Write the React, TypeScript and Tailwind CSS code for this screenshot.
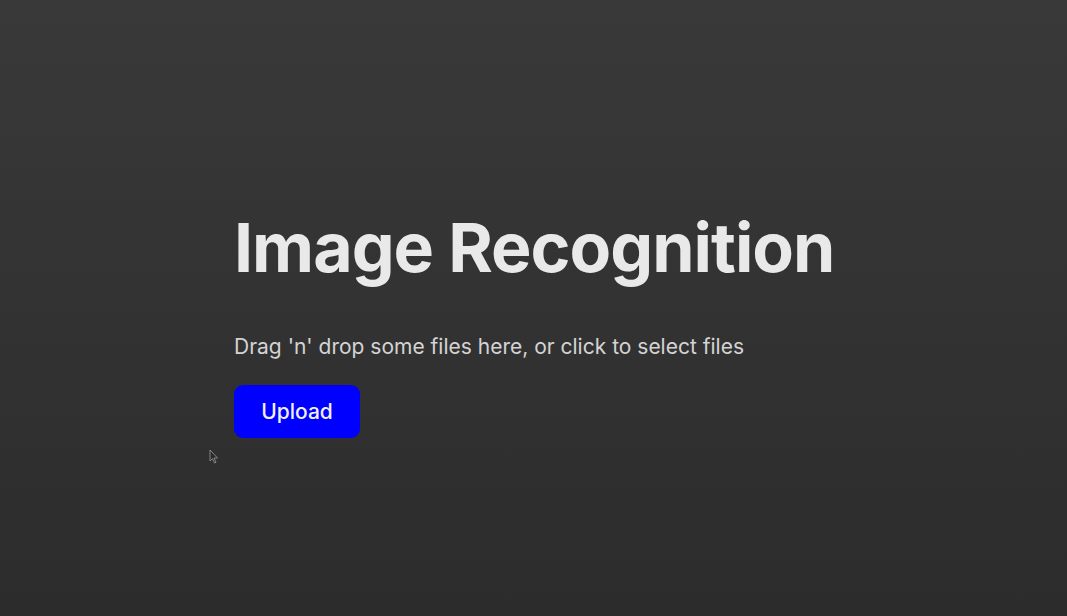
import React from "react";

export default function App() {
  return (
    <div
      className="relative w-full h-[616px] overflow-hidden bg-gradient-to-b from-[#393939] to-[#2d2c2d]"
      style={{ fontFamily: "Inter, 'Noto Sans', sans-serif" }}
    >
      <div className="flex flex-col items-start pl-[234px] pt-[205px]">
        <h1 className="text-[68px] leading-[84px] font-bold text-[#e9e9e9] tracking-[-1px]">
          Image Recognition
        </h1>
        <p className="mt-[46px] text-[21px] leading-[24px] text-[#d4d4d4]">
          Drag 'n' drop some files here, or click to select files
        </p>
        <button className="mt-[26px] w-[126px] h-[53px] rounded-[9px] bg-[#0000ff] text-[21px] font-medium text-[#f0f0f0]">
          Upload
        </button>
      </div>
      <svg
        className="absolute left-[209px] top-[449px]"
        width="10"
        height="15"
        viewBox="0 0 10 15"
      >
        <path d="M1 1 L1 12 L3.5 9.5 L5.5 14 L7 13.3 L5 9 L8.5 9 Z" fill="#2a2a2a" stroke="#9a9a9a" strokeWidth="0.8" />
      </svg>
    </div>
  );
}
